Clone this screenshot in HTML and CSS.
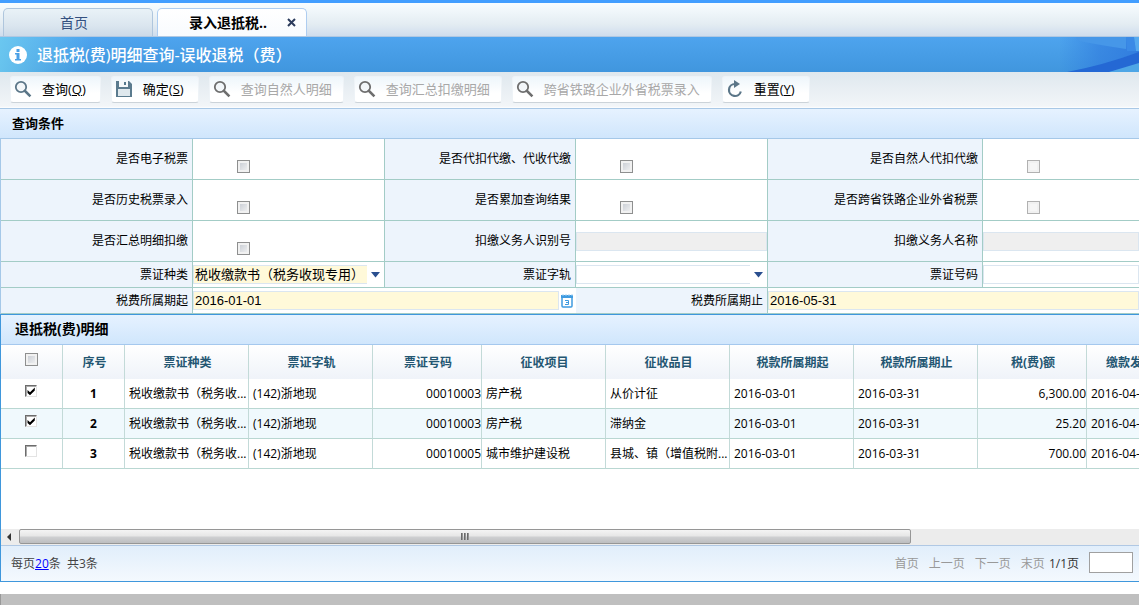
FILE: index.html
```html
<!DOCTYPE html>
<html lang="zh-CN">
<head>
<meta charset="utf-8">
<title>退抵税(费)明细查询</title>
<link rel="stylesheet" href="styles.css">
</head>
<body>
<svg class="defs" aria-hidden="true">
  <defs>
    <symbol id="search" viewBox="0 0 18 18">
      <circle cx="7" cy="7" r="5.2" fill="#eef3f6" fill-opacity=".6" stroke="currentColor" stroke-width="1.8"/>
      <path d="M11 11l4.500 4.500" stroke="currentColor" stroke-width="2.600" stroke-linecap="square"/>
    </symbol>
    <symbol id="save" viewBox="0 0 18 18">
      <path d="M1 1h13l3 3v13H1z" fill="#5b7b8e"/>
      <path d="M4 1h9v6H4z" fill="#f4f8fa"/>
      <path d="M9 2h2v3H9z" fill="#55788c"/>
      <path d="M3 9h12v7H3z" fill="#dfe8ed"/>
    </symbol>
    <symbol id="reset" viewBox="0 0 18 18">
      <path d="M9 4a6 6 0 1 0 5.800 7.500" fill="none" stroke="currentColor" stroke-width="2.200"/>
      <path d="M8 0l6 4-6 4z" fill="currentColor"/>
    </symbol>
  </defs>
</svg>

<nav class="tabs">
  <button class="tab" type="button">首页</button>
  <div class="tab tab-active"><span>录入退抵税..</span>
    <button class="close" type="button" aria-label="关闭"><svg viewBox="0 0 9 9"><path d="M1 1l7 7M8 1l-7 7" stroke="#2b3b5c" stroke-width="2"/></svg></button>
  </div>
</nav>

<header class="title">
  <svg class="info" viewBox="0 0 18 18" aria-hidden="true"><circle cx="9" cy="9" r="9" fill="#fff"/><path d="M7.500 3h3v3h-3zM6 7h4.500v6H12v1.500H6V13h1.500V8.500H6z" fill="#4aa0e6"/></svg>
  <h1>退抵税(费)明细查询-误收退税<span class="paren" lang="zh-TW">（</span>费<span class="paren" lang="zh-TW">）</span></h1>
  <svg class="swoosh" viewBox="0 0 80 35" aria-hidden="true">
    <defs><linearGradient id="fade"><stop offset="0" stop-color="#2f7de0" stop-opacity="0"/><stop offset=".5" stop-color="#2f7ade" stop-opacity=".6"/><stop offset="1" stop-color="#2f7ade" stop-opacity=".9"/></linearGradient></defs>
    <path d="M0 35V0h80v35z" fill="url(#fade)"/>
    <path d="M17 0h50v12Q40 8 20 4z" fill="#4697e8"/>
    <path d="M67 0h8l2 14h-9z" fill="#3a8ae6"/><path d="M75 0h5v14h-3z" fill="#55a9ee"/>
    <path d="M8 35Q45 28 80 15v13L50 35z" fill="#2468d4"/>
    <path d="M50 35l30-9v9z" fill="#4ea6e6"/>
  </svg>
</header>

<div class="toolbar">
  <button type="button"><svg class="blue"><use href="#search"/></svg>查询(<u>Q</u>)</button>
  <button type="button"><svg><use href="#save"/></svg>确定(<u>S</u>)</button>
  <button type="button" disabled><svg><use href="#search"/></svg>查询自然人明细</button>
  <button type="button" disabled><svg><use href="#search"/></svg>查询汇总扣缴明细</button>
  <button type="button" disabled><svg><use href="#search"/></svg>跨省铁路企业外省税票录入</button>
  <button type="button"><svg class="blue"><use href="#reset"/></svg>重置(<u>Y</u>)</button>
</div>

<h2 class="section">查询条件</h2>
<form class="form">
  <label for="f1">是否电子税票</label><div class="field tick"><input id="f1" type="checkbox"></div>
  <label for="f2">是否代扣代缴、代收代缴</label><div class="field tick"><input id="f2" type="checkbox"></div>
  <label for="f3">是否自然人代扣代缴</label><div class="field tick"><input id="f3" type="checkbox" disabled></div>

  <label for="f4">是否历史税票录入</label><div class="field tick"><input id="f4" type="checkbox"></div>
  <label for="f5">是否累加查询结果</label><div class="field tick"><input id="f5" type="checkbox"></div>
  <label for="f6">是否跨省铁路企业外省税票</label><div class="field tick"><input id="f6" type="checkbox" disabled></div>

  <label for="f7">是否汇总明细扣缴</label><div class="field tick"><input id="f7" type="checkbox"></div>
  <label for="f8">扣缴义务人识别号</label><div class="field"><input id="f8" type="text" disabled></div>
  <label for="f9">扣缴义务人名称</label><div class="field"><input id="f9" type="text" disabled></div>

  <label for="f10">票证种类</label><div class="field"><select id="f10" class="required"><option>税收缴款书（税务收现专用）</option></select><svg class="arrow" viewBox="0 0 9 6"><path d="M0 0h9L4.500 5.500z" fill="#2a4f8f"/></svg></div>
  <label for="f11">票证字轨</label><div class="field"><select id="f11"><option></option></select><svg class="arrow" viewBox="0 0 9 6"><path d="M0 0h9L4.500 5.500z" fill="#2a4f8f"/></svg></div>
  <label for="f12">票证号码</label><div class="field"><input id="f12" type="text"></div>

  <label for="f13">税费所属期起</label><div class="field wide open"><input id="f13" class="required" type="text" value="2016-01-01"><svg class="calendar" viewBox="0 0 12 14"><rect x="1" y="2" width="10" height="11" rx="1" fill="#fff" stroke="#3f9be0" stroke-width="1.500"/><path d="M0 1h12v3H0z" fill="#3f9be0"/><path d="M2 0v2M5 0v2M8 0v2M11 0v2" stroke="#a8d4f5"/><path d="M4 6.500h3.500v4H4M5 8.500h2.500" fill="none" stroke="#3f9be0"/></svg></div>
  <label for="f14">税费所属期止</label><div class="field wide"><input id="f14" class="required" type="text" value="2016-05-31"></div>
</form>

<section class="panel">
  <h2 class="section">退抵税(费)明细</h2>
  <div class="grid">
    <table>
      <colgroup><col class="c62"><col class="c62"><col class="c124"><col class="c124"><col class="c109"><col class="c124"><col class="c124"><col class="c124"><col class="c124"><col class="c109"><col class="c109"></colgroup>
      <thead><tr><th><input type="checkbox" aria-label="全选"></th><th>序号</th><th>票证种类</th><th>票证字轨</th><th>票证号码</th><th>征收项目</th><th>征收品目</th><th>税款所属期起</th><th>税款所属期止</th><th>税(费)额</th><th>缴款发生日期</th></tr></thead>
      <tbody>
        <tr><td class="pick"><input type="checkbox" checked aria-label="选择 1"></td><td class="no">1</td><td>税收缴款书<span class="paren" lang="zh-TW">（</span>税务收...</td><td>(142)浙地现</td><td class="num">00010003</td><td>房产税</td><td>从价计征</td><td>2016-03-01</td><td>2016-03-31</td><td class="num">6,300.00</td><td>2016-04-01</td></tr>
        <tr><td class="pick"><input type="checkbox" checked aria-label="选择 2"></td><td class="no">2</td><td>税收缴款书<span class="paren" lang="zh-TW">（</span>税务收...</td><td>(142)浙地现</td><td class="num">00010003</td><td>房产税</td><td>滞纳金</td><td>2016-03-01</td><td>2016-03-31</td><td class="num">25.20</td><td>2016-04-01</td></tr>
        <tr><td class="pick"><input type="checkbox" aria-label="选择 3"></td><td class="no">3</td><td>税收缴款书<span class="paren" lang="zh-TW">（</span>税务收...</td><td>(142)浙地现</td><td class="num">00010005</td><td>城市维护建设税</td><td>县城、镇<span class="paren" lang="zh-TW">（</span>增值税附...</td><td>2016-03-01</td><td>2016-03-31</td><td class="num">700.00</td><td>2016-04-01</td></tr>
      </tbody>
    </table>
  </div>
  <div class="scroll">
    <svg viewBox="0 0 18 16"><path d="M10 4v8L6 8z" fill="#333"/></svg>
    <div class="thumb"><i></i><i></i><i></i></div>
  </div>
  <footer class="pager">
    <p>每页<a href="#">20</a>条&nbsp; 共3条</p>
    <div class="pages">
      <button type="button" disabled>首页</button><button type="button" disabled>上一页</button><button type="button" disabled>下一页</button><button type="button" disabled>末页</button>
      <span>1/1页</span><input type="text" aria-label="页码">
    </div>
  </footer>
</section>
<div class="bottom"></div>
</body>
</html>
```
FILE: styles.css
```css
* { box-sizing: border-box; }
body {
  margin: 0;
  background: #fff;
  color: #000;
  font: 12px/18px "Open Sans", "Noto Sans CJK SC", sans-serif;
  overflow: hidden;
}
button, input, select { font: inherit; color: inherit; margin: 0; padding: 0; border: 0; background: none; border-radius: 0; }
h1, h2, p { margin: 0; }
svg { display: block; flex: none; }
.defs { position: absolute; width: 0; height: 0; }
.paren { font-family: "Noto Sans CJK TC", sans-serif; }

.tabs {
  display: flex;
  align-items: flex-end;
  gap: 4px;
  height: 37px;
  padding: 0 3px;
  border-top: 3px solid #429eff;
  border-bottom: 1px solid #b0c8e2;
  background: linear-gradient(#f8fdff, #e3ecf2 65%, #cfdded);
}
.tab {
  display: flex;
  align-items: center;
  justify-content: center;
  width: 150px;
  height: 28px;
  border: 1px solid #afc6dd;
  border-bottom: 0;
  border-radius: 5px 5px 0 0;
  background: linear-gradient(#e9f2f7, #dbe6ef 60%, #ccdae8);
  color: #33507f;
  font-size: 14px;
}
.tab:first-child { padding-right: 8px; }
.tab.tab-active {
  justify-content: flex-end;
  gap: 20px;
  padding-right: 10px;
  border-color: #aecdf0;
  background: linear-gradient(#fff, #f8fbfe);
  color: #000;
  font-weight: bold;
}
.close svg { width: 9px; height: 9px; }

.title {
  position: relative;
  display: flex;
  align-items: center;
  gap: 10px;
  height: 35px;
  padding-left: 9px;
  background: linear-gradient(100deg, rgba(110, 203, 240, .9), rgba(80, 170, 235, 0) 90px), linear-gradient(#4ea4ee, #4096de);
  color: #fff;
}
.title h1 { font-size: 16px; line-height: 24px; font-weight: 500; }
.info { width: 18px; height: 18px; }
.swoosh { position: absolute; right: 0; top: 0; width: 80px; height: 35px; }

.toolbar {
  display: flex;
  gap: 10px;
  padding: 4px 10px 5px;
  border-bottom: 1px solid #a9c8e6;
  background: linear-gradient(#dfe8ee, #f2f5f8 95%, #fff);
}
.toolbar button {
  display: flex;
  align-items: center;
  height: 27px;
  padding: 0 14px 2px 3px;
  border: 1px solid #eef3f7;
  border-bottom-color: #ccd3d9;
  border-radius: 3px;
  background: linear-gradient(#eef6fb, #fff 65%);
  font-size: 13px;
}
.toolbar svg { width: 18px; height: 18px; margin-right: 10px; color: #6e6e6e; }
.toolbar svg.blue { color: #5b7688; }
.toolbar button:disabled { padding-right: 11px; color: #a8a8a8; }

.section {
  height: 30px;
  padding-left: 12px;
  border-bottom: 1px solid #a5c8e8;
  background: linear-gradient(#e6f2ff, #d0e6fc);
  font-size: 13px;
  line-height: 28px;
  font-weight: bold;
}

.form {
  display: grid;
  grid-template-columns: 192fr 192fr 191fr 192fr 215fr 156fr;
  grid-template-rows: repeat(3, 41px) repeat(2, 26px);
  border-left: 1px solid #a5c8e8;
}
.form label, .field {
  display: flex;
  align-items: center;
  min-width: 0;
  border-right: 1px solid #a3ccc6;
  border-bottom: 1px solid #a3ccc6;
}
.form label { justify-content: flex-end; padding-right: 4px; background: #edf4fc; }
.field:nth-of-type(3n) { border-right: 0; }
.field.wide { grid-column: span 2; border-right: 0; }
.field.tick { padding: 14px 0 0 44px; }
.field input[type="text"], .field select {
  flex: 1;
  min-width: 0;
  width: 100%;
  height: 19px;
  padding: 0 1px;
  border: 1px solid #dbe6f0;
  font: 13px/16px "Liberation Sans", "Noto Sans CJK SC", sans-serif;
}
.field select { appearance: none; border-right: 0; }
.field input:disabled { background: #efefef; }
.field .required { background: #fff9d9; }
.arrow { width: 9px; height: 6px; margin: 0 4px; }
.calendar { width: 12px; height: 14px; margin: 0 3px 0 2px; }

input[type="checkbox"] {
  appearance: none;
  display: block;
  width: 13px;
  height: 13px;
  border: 1px solid #8e8f8f;
  background: linear-gradient(135deg, #c3c8d0, #f6f6f6);
  box-shadow: inset 0 0 0 2px #f1f1f1;
}
input[type="checkbox"]:disabled { border-color: #b1b1b1; background: #f6f6f6; }

.panel { border: 1px solid #3f97dc; border-right: 0; }
.panel .section { padding-left: 14px; border-color: #a5c8ee; font-size: 14px; }
.grid { height: 184px; overflow: hidden; }
table { width: 1195px; table-layout: fixed; border-collapse: separate; border-spacing: 0; }
.c62 { width: 62px; }
.c109 { width: 109px; }
.c124 { width: 124px; }
th, td { overflow: hidden; text-overflow: ellipsis; white-space: nowrap; padding: 0; border-right: 1px solid #c3dad8; text-align: left; }
th { height: 34px; padding: 2px 0 0 2px; background: linear-gradient(#fff, #eff3f9); color: #235672; text-align: center; font-weight: bold; }
th input { margin: -8px auto 0 22px; }
td { height: 30px; padding-left: 4px; border-bottom: 1px solid #b9d7d2; }
tbody tr:nth-child(even) { background: #f0f9fd; }
td.num { padding: 0; text-align: right; }
td.no { padding: 0; text-align: center; font-weight: bold; }
td.pick { padding: 0; }
td.pick input {
  width: 12px;
  height: 12px;
  margin: -5px auto 0 24px;
  border: 1px solid #e3e3e3;
  border-top-color: #6c6c6c;
  border-left-color: #6c6c6c;
  background: #fff;
  box-shadow: inset 1px 1px 0 #aaa;
}
td.pick input:checked::after {
  content: "";
  display: block;
  height: 10px;
  background: #000;
  clip-path: polygon(15% 40%, 40% 62%, 88% 15%, 88% 45%, 40% 92%, 15% 70%);
}

.scroll { display: flex; height: 16px; background: #ececec; }
.scroll svg { width: 18px; height: 16px; }
.thumb {
  display: flex;
  align-items: center;
  justify-content: center;
  gap: 1px;
  width: 78.4%;
  height: 15px;
  border: 1px solid #969696;
  border-radius: 2px;
  background: linear-gradient(#f4f4f4, #e6e6e6 48%, #cfd0d2 52%, #bdbec0);
}
.thumb i { width: 2px; height: 7px; background: linear-gradient(90deg, #555, #aaa); }

.pager {
  display: flex;
  align-items: center;
  justify-content: space-between;
  height: 36px;
  padding: 0 6px 0 10px;
  border-top: 1px solid #b0c8e4;
  background: linear-gradient(#e1eefb, #f4f9fe);
  color: #444;
}
.pager a { color: #00f; }
.pages { display: flex; align-items: center; gap: 10px; }
.pages button { color: #999; }
.pages span { margin-left: -6px; color: #333; }
.pages input { width: 44px; height: 21px; margin-bottom: 3px; border: 1px solid #a0a0a0; background: #fff; }

.bottom { height: 11px; margin: 12px 0 2px; background: #bfbfbf; border-left: 1px solid #999; }
```
